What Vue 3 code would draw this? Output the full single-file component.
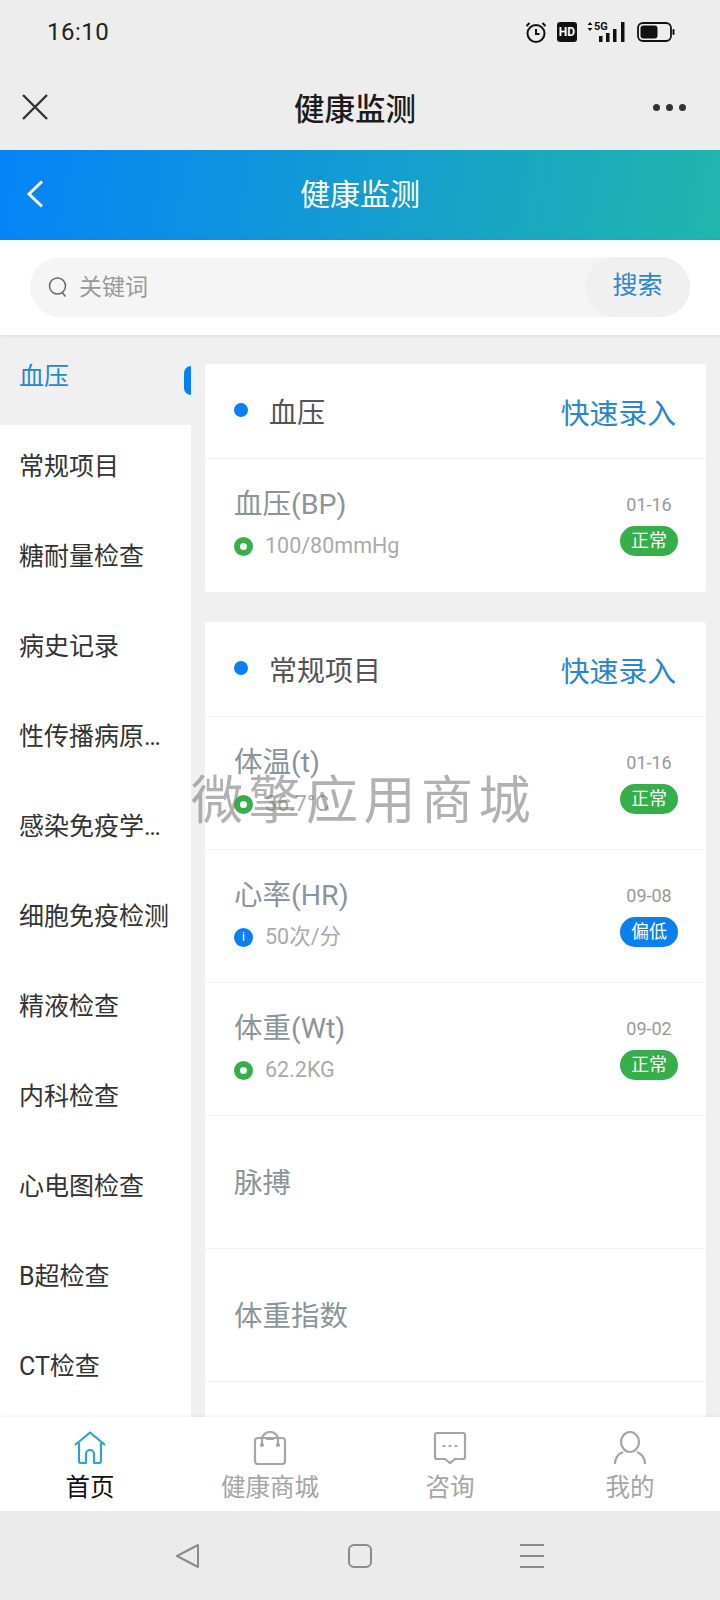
<script setup>
const sideItems = ['血压', '常规项目', '糖耐量检查', '病史记录', '性传播病原体检查', '感染免疫学检查', '细胞免疫检测', '精液检查', '内科检查', '心电图检查', 'B超检查', 'CT检查']
const normal = [
  { name: '体温(t)', value: '36.7°C', date: '01-16', state: '正常', tone: 'green' },
  { name: '心率(HR)', value: '50次/分', date: '09-08', state: '偏低', tone: 'blue' },
  { name: '体重(Wt)', value: '62.2KG', date: '09-02', state: '正常', tone: 'green' },
  { name: '脉搏' },
  { name: '体重指数' },
  { name: '' }
]
const bp = [{ name: '血压(BP)', value: '100/80mmHg', date: '01-16', state: '正常', tone: 'green' }]
const groups = [
  { title: '血压', rows: bp },
  { title: '常规项目', rows: normal }
]
</script>

<template>
  <div class="phone">
    <div class="status">
      <span class="time">16:10</span>
      <div class="status-icons">
        <svg class="alarm" width="22" height="22" viewBox="0 0 22 22" fill="none" stroke="#111" stroke-width="2">
          <circle cx="11" cy="12.500" r="8.500" />
          <path d="M11 8v5h3.500M1.500 5l3-3M20.500 5l-3-3" />
        </svg>
        <span class="hd">HD</span>
        <div class="signal">
          <span class="five-g">5G</span>
          <svg width="40" height="22" viewBox="0 0 40 22" fill="#111">
            <path d="M3 1l2.500 3h-5zM3 10L.5 7h5z" />
            <rect x="12" y="15" width="3.500" height="6" />
            <rect x="19" y="12" width="3.500" height="9" />
            <rect x="26" y="8" width="3.500" height="13" />
            <rect x="34" y="1" width="3.500" height="20" />
          </svg>
        </div>
        <svg width="38" height="20" viewBox="0 0 38 20" fill="none">
          <rect x="1" y="1" width="33" height="18" rx="5" stroke="#111" stroke-width="1.800" />
          <rect x="3.500" y="3.500" width="17" height="13" rx="3" fill="#111" />
          <rect x="35.500" y="7" width="2" height="6" rx="1" fill="#111" />
        </svg>
      </div>
    </div>

    <div class="wx-bar">
      <svg width="26" height="26" viewBox="0 0 26 26" stroke="#333" stroke-width="2.400" fill="none">
        <path d="M1 1l24 24M25 1L1 25" />
      </svg>
      <span class="wx-title">健康监测</span>
      <div class="dots"><i></i><i></i><i></i></div>
    </div>

    <div class="hero">
      <svg class="back" width="18" height="28" viewBox="0 0 18 28" fill="none" stroke="#fff" stroke-width="3">
        <path d="M16 1.500L3 14l13 12.500" />
      </svg>
      <span class="hero-title">健康监测</span>
    </div>

    <div class="search-wrap">
      <div class="search">
        <svg class="glass" width="20" height="22" viewBox="0 0 20 22" fill="none" stroke="#666" stroke-width="1.500">
          <circle cx="9.500" cy="10" r="8" />
          <path d="M14.500 17l3 3.500" />
        </svg>
        <span class="placeholder">关键词</span>
        <span class="search-btn">搜索</span>
      </div>
    </div>

    <div class="main">
      <aside class="side">
        <div v-for="(item, i) in sideItems" :key="item" class="side-item" :class="{ active: i === 0 }">
          <span class="side-text">{{ item }}</span>
        </div>
      </aside>
      <div class="content">
        <section v-for="g in groups" :key="g.title" class="card">
          <header class="card-head">
            <i class="head-dot"></i>
            <span class="head-title">{{ g.title }}</span>
            <span class="quick">快速录入</span>
          </header>
          <div v-for="(r, i) in g.rows" :key="i" class="row">
            <div class="row-left">
              <div class="row-name">{{ r.name }}</div>
              <div v-if="r.value" class="row-value">
                <span class="state-icon" :class="r.tone">{{ r.tone === 'blue' ? 'i' : '' }}</span>
                {{ r.value }}
              </div>
            </div>
            <div v-if="r.date" class="row-right">
              <span class="date">{{ r.date }}</span>
              <span class="badge" :class="r.tone">{{ r.state }}</span>
            </div>
          </div>
        </section>
      </div>
      <div class="watermark">微擎应用商城</div>
    </div>

    <nav class="tabs">
      <div class="tab on">
        <svg width="36" height="34" viewBox="0 0 36 34" fill="none" stroke="#2aa3d2" stroke-width="2.200" stroke-linejoin="round">
          <path d="M3 14L18 1.500 33 14" />
          <path d="M7 12v18a2 2 0 0 0 2 2h5V23a4 4 0 0 1 8 0v9h5a2 2 0 0 0 2-2V12" />
        </svg>
        <span>首页</span>
      </div>
      <div class="tab">
        <svg width="36" height="34" viewBox="0 0 36 34" fill="none" stroke="#a5a5a5" stroke-width="2.200">
          <rect x="3" y="7" width="30" height="26" rx="3" />
          <path d="M10 13V8a8 7 0 0 1 16 0v5M14 8h8" />
          <circle cx="10" cy="14" r="1" fill="#a5a5a5" />
          <circle cx="26" cy="14" r="1" fill="#a5a5a5" />
        </svg>
        <span>健康商城</span>
      </div>
      <div class="tab">
        <svg width="36" height="34" viewBox="0 0 36 34" fill="none" stroke="#a5a5a5" stroke-width="2.200">
          <path d="M5 2h26a2 2 0 0 1 2 2v22a2 2 0 0 1-2 2H23l-5 4-5-4H5a2 2 0 0 1-2-2V4a2 2 0 0 1 2-2z" />
          <path d="M11.500 15h1M17.500 15h1M23.500 15h1" stroke-linecap="round" />
        </svg>
        <span>咨询</span>
      </div>
      <div class="tab">
        <svg width="36" height="34" viewBox="0 0 36 34" fill="none" stroke="#a5a5a5" stroke-width="2.200">
          <ellipse cx="18" cy="11" rx="9" ry="10" />
          <path d="M3 33c0-6 3-10 8-12M33 33c0-6-3-10-8-12" />
        </svg>
        <span>我的</span>
      </div>
    </nav>

    <div class="sys-nav">
      <svg width="26" height="26" viewBox="0 0 26 26" fill="none" stroke="#8a8a8a" stroke-width="2" stroke-linejoin="round">
        <path d="M23 2v22L2 13z" />
      </svg>
      <svg width="26" height="26" viewBox="0 0 26 26" fill="none" stroke="#8a8a8a" stroke-width="2">
        <rect x="2" y="2" width="22" height="22" rx="5" />
      </svg>
      <svg width="26" height="26" viewBox="0 0 26 26" fill="none" stroke="#8a8a8a" stroke-width="2">
        <path d="M1 2h24M1 13h24M1 24h24" />
      </svg>
    </div>
  </div>
</template>

<style>
html, body { margin: 0; background: #efefef; }
</style>

<style scoped>
.phone {
  width: 720px;
  height: 1600px;
  display: flex;
  flex-direction: column;
  overflow: hidden;
  background: #f0f0f0;
  font-family: Roboto, "Noto Sans CJK SC", sans-serif;
}
.status {
  height: 64px;
  flex: none;
  display: flex;
  align-items: center;
  justify-content: space-between;
  padding: 0 45px 0 47px;
  background: #ededed;
}
.time { font-size: 24px; color: #222; letter-spacing: 0.5px; }
.status-icons { display: flex; align-items: center; gap: 10px; }
.hd {
  width: 20px;
  height: 20px;
  border-radius: 3px;
  background: #111;
  color: #fff;
  font-size: 12px;
  font-weight: 700;
  line-height: 20px;
  text-align: center;
}
.signal { position: relative; display: flex; }
.five-g {
  position: absolute;
  left: 7px;
  top: 0;
  font-size: 11px;
  line-height: 12px;
  font-weight: 700;
  color: #111;
}
.wx-bar {
  height: 86px;
  flex: none;
  display: flex;
  align-items: center;
  justify-content: space-between;
  padding: 0 34px 0 22px;
  background: #ededed;
}
.wx-title { font-size: 30.500px; font-weight: 500; color: #1c1c1c; margin-left: 9px; }
.dots { display: flex; gap: 6px; }
.dots i { width: 7px; height: 7px; border-radius: 50%; background: #333; }
.hero {
  height: 90px;
  flex: none;
  display: flex;
  align-items: center;
  justify-content: center;
  position: relative;
  padding-bottom: 6px;
  box-sizing: border-box;
  background: linear-gradient(100deg, #0583f8 0%, #20b6ac 100%);
}
.back { position: absolute; left: 26px; top: 30px; }
.hero-title { font-size: 30px; color: #fff; }
.search-wrap {
  height: 95px;
  flex: none;
  box-sizing: border-box;
  padding: 17px 30px 18px;
  background: #fff;
  box-shadow: 0 1px 4px rgba(0, 0, 0, 0.08);
  position: relative;
  z-index: 1;
}
.search {
  height: 60px;
  display: flex;
  align-items: center;
  padding-left: 18px;
  border-radius: 30px;
  background: #f5f5f5;
}
.placeholder { margin-left: 11px; margin-bottom: 4px; font-size: 23px; color: #999; }
.search-btn {
  margin-left: auto;
  width: 105px;
  height: 60px;
  border-radius: 30px;
  background: #f0f0f0;
  color: #2a86d0;
  font-size: 25px;
  line-height: 58px;
  text-align: center;
}
.main { flex: 1; min-height: 0; display: flex; position: relative; overflow: hidden; }
.side { width: 191px; flex: none; background: #fff; }
.side-item {
  height: 90px;
  box-sizing: border-box;
  padding: 24px 21px 0 19px;
  font-size: 25px;
  line-height: 36px;
  color: #333;
  position: relative;
}
.side-text { display: block; white-space: nowrap; overflow: hidden; text-overflow: ellipsis; }
.side-item.active { background: #f0f0f0; color: #1f8ad0; }
.side-item.active::after {
  content: "";
  position: absolute;
  right: 0;
  top: 31px;
  width: 7px;
  height: 29px;
  border-radius: 7px 0 0 7px;
  background: #0a7ff0;
}
.content {
  flex: 1;
  min-width: 0;
  padding: 29px 14px 0;
  display: flex;
  flex-direction: column;
  gap: 30px;
}
.card { background: #fff; border-radius: 3px; flex: none; }
.card-head {
  height: 95px;
  box-sizing: border-box;
  display: flex;
  align-items: center;
  padding: 0 30px 0 29px;
  border-bottom: 1px solid #f2f2f2;
}
.head-dot { width: 14px; height: 14px; border-radius: 50%; background: #0a7ff0; margin-top: -3px; }
.head-title { margin-left: 21px; font-size: 28px; color: #555; }
.quick { margin-left: auto; font-size: 28.800px; color: #2a86d0; }
.row {
  height: 133px;
  box-sizing: border-box;
  display: flex;
  justify-content: space-between;
  padding: 26px 28px 0 29px;
  border-bottom: 1px solid #f2f2f2;
}
.row:last-child { border-bottom: 0; }
.row-name { font-size: 28.500px; line-height: 40px; color: #8a9499; }
.row-left:not(:has(.row-value)) { padding-top: 22px; }
.row-value {
  display: flex;
  align-items: center;
  gap: 12px;
  margin-top: 5px;
  font-size: 21.500px;
  line-height: 32px;
  color: #aaa;
}
.state-icon {
  width: 19px;
  height: 19px;
  box-sizing: border-box;
  border-radius: 50%;
  font-size: 12px;
  line-height: 19px;
  text-align: center;
  color: #fff;
}
.state-icon.green { border: 6px solid #36ae4a; background: #fff; }
.state-icon.blue { background: #0a7ff0; }
.row-right { display: flex; flex-direction: column; align-items: center; gap: 8px; padding-top: 6px; }
.date { font-size: 18px; line-height: 27px; color: #999; }
.badge {
  width: 58px;
  height: 30px;
  border-radius: 15px;
  font-size: 18px;
  line-height: 30px;
  text-align: center;
  color: #fff;
}
.badge.green { background: #36ae4a; }
.badge.blue { background: #0a7ff0; }
.watermark {
  position: absolute;
  left: 191px;
  top: 433px;
  font-size: 52px;
  line-height: 68px;
  letter-spacing: 5.500px;
  color: rgba(120, 120, 120, 0.58);
  white-space: nowrap;
}
.tabs {
  height: 94px;
  flex: none;
  display: grid;
  grid-template-columns: repeat(4, 180px);
  background: #fff;
  position: relative;
  box-shadow: 0 -1px 3px rgba(0, 0, 0, 0.06);
}
.tab {
  display: flex;
  flex-direction: column;
  align-items: center;
  padding-top: 14px;
  font-size: 24.500px;
  line-height: 36px;
  color: #a5a5a5;
}
.tab svg { margin-bottom: 5px; }
.tab.on { color: #111; }
.sys-nav {
  height: 89px;
  flex: none;
  box-sizing: border-box;
  display: flex;
  justify-content: center;
  gap: 146px;
  padding-top: 32px;
  background: #ebebeb;
}
</style>
